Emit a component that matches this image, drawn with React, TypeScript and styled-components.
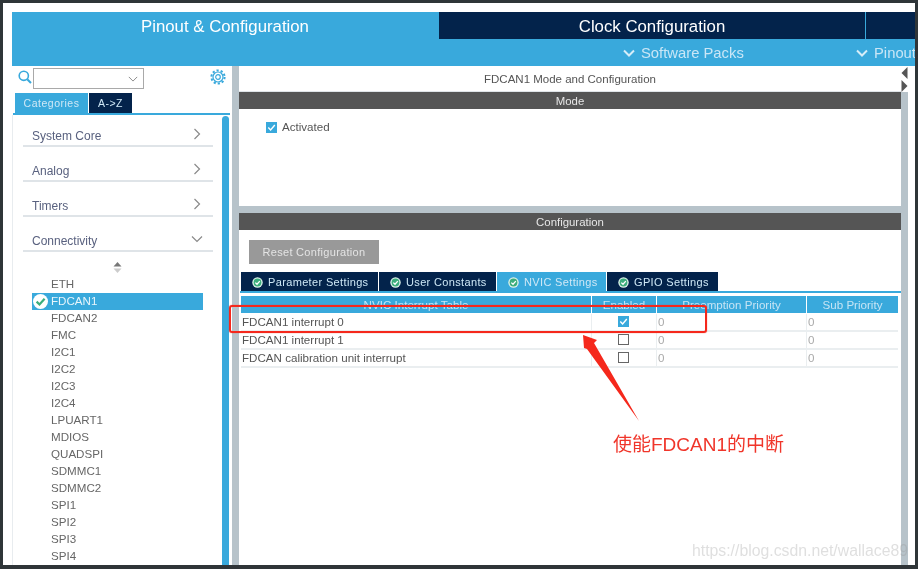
import React from "react";
import styled, { createGlobalStyle } from "styled-components";

const Global = createGlobalStyle`
  html, body { margin: 0; padding: 0; background: #2f3538; }
  body { font-family: "Liberation Sans", Arial, sans-serif; }
`;
const BLUE = "#39a9dc";
const NAVY = "#03234b";

const Frame = styled.div`
  width: 918px; height: 569px; box-sizing: border-box;
  padding: 3px 3px 4px 3px; background: #2f3538; overflow: hidden; position: relative;
  filter: blur(0.35px);
`;
const Sheet = styled.div`
  height: 100%; box-sizing: border-box; background: #fff; padding: 9px 0 0 9px;
  display: flex; flex-direction: column;
`;
const Header = styled.header`
  height: 54px; background: ${BLUE}; display: flex; flex-direction: column; flex: none;
`;
const TopTabs = styled.div`
  height: 27px; display: flex; flex: none;
`;
const MainTab = styled.div<{ $active?: boolean; $w: number }>`
  width: ${(p) => p.$w}px; flex: none; box-sizing: border-box; height: 27px;
  background: ${(p) => (p.$active ? BLUE : NAVY)};
  color: #fff; font-size: 16.8px; line-height: 29px; text-align: center;
  margin-right: 1px;
  &:last-child { margin-right: 0; flex: 1; }
`;
const SubBar = styled.div`
  height: 27px; display: flex; align-items: center; position: relative; overflow: hidden;
  color: #c9e6f6; font-size: 14.8px;
`;
const SubItem = styled.div<{ $left: number }>`
  position: absolute; left: ${(p) => p.$left}px; top: 0; height: 27px;
  display: flex; align-items: center; gap: 6px; white-space: nowrap;
`;
const Body = styled.div`
  flex: 1; display: flex; min-height: 0;
`;
const Side = styled.aside`
  width: 220px; flex: none; display: flex; flex-direction: column; overflow: hidden;
`;
const SearchRow = styled.div`
  height: 27px; flex: none; display: flex; align-items: flex-start; box-sizing: border-box;
  padding: 2px 6px 0 6px;
`;
const SearchIcon = styled.svg`
  width: 14px; height: 14px; margin: 2px 1px 0 0; flex: none;
`;
const SearchBox = styled.div`
  width: 111px; height: 21px; box-sizing: border-box; border: 1px solid #a9a9a9; flex: none;
  display: flex; align-items: center; justify-content: flex-end; padding-right: 5px;
  margin-left: 0;
`;
const Gear = styled.svg`
  width: 16px; height: 16px; margin: 1px 0 0 auto; flex: none;
`;
const SideTabs = styled.div`
  height: 20px; flex: none; display: flex; padding-left: 3px; gap: 1px;
`;
const SideTab = styled.div<{ $active?: boolean; $w: number }>`
  width: ${(p) => p.$w}px; height: 20px; background: ${(p) => (p.$active ? BLUE : NAVY)};
  color: #cfe8f6; font-size: 10.5px; letter-spacing: 0.5px; line-height: 20px; text-align: center;
`;
const SideRule = styled.div`
  height: 2px; flex: none; margin: 0 2px 0 1px; background: ${BLUE};
`;
const SideBody = styled.div`
  flex: 1; display: flex; min-height: 0; border-left: 1px solid #e8ecef; padding-right: 3px;
`;
const SideList = styled.div`
  flex: 1; min-width: 0; overflow: hidden;
`;
const Thumb = styled.div`
  width: 7px; flex: none; margin-top: 1px; background: ${BLUE}; border-radius: 4px 4px 0 0;
`;
const Category = styled.div`
  height: 32px; margin: 0 9px 3px 10px; box-sizing: border-box; border-bottom: 2px solid #dfe4e8;
  display: flex; align-items: flex-end; justify-content: space-between;
  padding: 0 10px 1px 9px; color: #59617f; font-size: 12px; line-height: 16px;
  svg { margin-bottom: 4px; }
`;
const SortMark = styled.div`
  height: 21px; display: flex; align-items: center; justify-content: center;
  box-sizing: border-box; padding-top: 4px;
`;
const Peripheral = styled.div<{ $selected?: boolean }>`
  height: 17px; margin: 0 19px 0 19px; padding-left: 19px; position: relative;
  background: ${(p) => (p.$selected ? BLUE : "transparent")};
  color: ${(p) => (p.$selected ? "#e8f5fb" : "#666")};
  font-size: 11.6px; line-height: 15px;
`;
const SelectedCheck = styled.svg`
  position: absolute; left: 0; top: 0; width: 17px; height: 17px;
`;
const Splitter = styled.div`
  width: 7px; flex: none; background: #b7c3ca;
`;
const Main = styled.main`
  width: 662px; flex: none; display: flex; flex-direction: column; min-height: 0;
`;
const PanelTitle = styled.div`
  height: 26px; flex: none; box-sizing: border-box; padding-top: 6px; text-align: center;
  color: #555; font-size: 11.5px; line-height: 15px; border-bottom: 1px solid #dfe4e8;
`;
const DarkBar = styled.div`
  height: 17px; flex: none; background: #555; color: #e7e7e7; font-size: 11.4px; line-height: 19px;
  text-align: center;
`;
const ModeBody = styled.div`
  height: 97px; flex: none; box-sizing: border-box; padding: 13px 0 0 27px;
  display: flex; align-items: flex-start; gap: 5px; color: #555; font-size: 11.6px; line-height: 11px;
  svg { flex: none; }
  span { line-height: 10px; }
`;
const Band = styled.div`
  height: 7px; flex: none; background: #b7c3ca;
`;
const ConfigBody = styled.div`
  flex: 1; min-height: 0; display: flex; flex-direction: column; overflow: hidden;
`;
const ResetButton = styled.div`
  width: 130px; height: 24px; flex: none; margin: 10px 0 0 10px; background: #999;
  color: #e4e4e4; font-size: 11px; letter-spacing: 0.3px; line-height: 24px; text-align: center;
`;
const ConfigTabs = styled.div`
  display: flex; gap: 1px; margin: 8px 0 0 2px; height: 19px; flex: none;
`;
const ConfigTab = styled.div<{ $active?: boolean; $w: number }>`
  width: ${(p) => p.$w}px; height: 19px; box-sizing: border-box; padding: 1px 0 0 11px;
  background: ${(p) => (p.$active ? BLUE : NAVY)}; color: #cfe8f6;
  font-size: 11px; letter-spacing: 0.35px; line-height: 18px; white-space: nowrap;
  display: flex; align-items: center; gap: 5px;
`;
const TabRule = styled.div`
  height: 2px; flex: none; margin-left: 1px; background: ${BLUE};
`;
const Table = styled.div`
  margin: 3px 3px 0 2px; flex: none;
`;
const TableRow = styled.div<{ $head?: boolean }>`
  display: grid; grid-template-columns: 350px 64px 149px 91px; column-gap: 1px;
  height: 18px; box-sizing: border-box;
  border-bottom: ${(p) => (p.$head ? "1px solid #fff" : "2px solid #eaeef0")};
`;
const HeadCell = styled.div`
  background: ${BLUE}; color: #c6e4f4; font-size: 11.6px; line-height: 17px; text-align: center;
  white-space: nowrap;
`;
const NameCell = styled.div`
  color: #555; font-size: 11.6px; line-height: 15px; padding-left: 1px; white-space: nowrap;
`;
const CheckCell = styled.div`
  display: flex; align-items: center; justify-content: center; box-shadow: -1px 0 #eaeef0;
  padding: 0 1px 1px 0;
`;
const NumCell = styled.div`
  color: #aaa; font-size: 11.6px; line-height: 15px; padding-left: 1px; box-shadow: -1px 0 #eaeef0;
`;
const Rail = styled.div`
  width: 7px; flex: none; display: flex; flex-direction: column;
`;
const RailArrows = styled.div`
  height: 26px; flex: none; display: flex; flex-direction: column; align-items: center;
`;
const RailTrack = styled.div`
  flex: 1; background: #b7c3ca;
`;
const RedBox = styled.div`
  position: absolute; left: 229px; top: 305px; width: 478px; height: 28px; box-sizing: border-box;
  border: 2px solid #f5281c; border-radius: 3px; box-shadow: 0 0 1px #f5281c;
`;
const ArrowMark = styled.svg`
  position: absolute; left: 578px; top: 330px; width: 66px; height: 96px;
`;
const Note = styled.div`
  position: absolute; left: 613px; top: 434px; color: #f0352a; font-size: 19px; line-height: 22px;
  font-family: "Liberation Sans", "Noto Sans CJK SC", sans-serif; white-space: nowrap;
`;
const Watermark = styled.div`
  position: absolute; right: 10px; top: 541px; color: rgba(150,150,150,.3); font-size: 15.8px;
  line-height: 19px; white-space: nowrap;
`;

const Chevron = ({ down, color = "#8a8a8a", size = 12, w = 1.2 }: { down?: boolean; color?: string; size?: number; w?: number }) => (
  <svg width={size} height={size} viewBox="0 0 12 12" fill="none" stroke={color} strokeWidth={w}>
    <path d={down ? "M1 3.5 6 8.5 11 3.5" : "M3.5 1 8.5 6 3.5 11"} />
  </svg>
);

const TabCheck = () => (
  <svg width="11" height="11" viewBox="0 0 11 11" style={{ flex: "none" }}>
    <circle cx="5.5" cy="5.5" r="5.2" fill="#dff3ea" />
    <circle cx="5.5" cy="5.5" r="3.9" fill="#3cae7c" />
    <path d="M3.3 5.6 5 7.2 7.8 4.1" fill="none" stroke="#fff" strokeWidth="1.3" />
  </svg>
);

const CheckBox = ({ checked }: { checked?: boolean }) =>
  checked ? (
    <svg width="11" height="11" viewBox="0 0 11 11">
      <rect width="11" height="11" fill={BLUE} />
      <path d="M2.3 5.6 4.6 8 8.8 3" fill="none" stroke="#fff" strokeWidth="1.4" />
    </svg>
  ) : (
    <svg width="11" height="11" viewBox="0 0 11 11">
      <rect x=".5" y=".5" width="10" height="10" fill="#fff" stroke="#666" />
    </svg>
  );

const peripherals = ["ETH", "FDCAN1", "FDCAN2", "FMC", "I2C1", "I2C2", "I2C3", "I2C4", "LPUART1", "MDIOS", "QUADSPI", "SDMMC1", "SDMMC2", "SPI1", "SPI2", "SPI3", "SPI4"];
const rows = [
  { name: "FDCAN1 interrupt 0", on: true },
  { name: "FDCAN1 interrupt 1", on: false },
  { name: "FDCAN calibration unit interrupt", on: false },
];
const tabs = [
  { label: "Parameter Settings", w: 137 },
  { label: "User Constants", w: 117 },
  { label: "NVIC Settings", w: 109, active: true },
  { label: "GPIO Settings", w: 111 },
];

export default function App() {
  return (
    <>
      <Global />
      <Frame>
        <Sheet>
          <Header>
            <TopTabs>
              <MainTab $active $w={426}>Pinout &amp; Configuration</MainTab>
              <MainTab $w={426}>Clock Configuration</MainTab>
              <MainTab $w={49} />
            </TopTabs>
            <SubBar>
              <SubItem $left={611}><Chevron down color="#d6edf8" size={12} w={2} />Software Packs</SubItem>
              <SubItem $left={844}><Chevron down color="#d6edf8" size={12} w={2} />Pinout</SubItem>
            </SubBar>
          </Header>
          <Body>
            <Side>
              <SearchRow>
                <SearchIcon viewBox="0 0 14 14" fill="none" stroke={BLUE} strokeWidth="1.6">
                  <circle cx="5.8" cy="5.8" r="4.6" />
                  <path d="M9.2 9.2 13 13" strokeWidth="2" />
                </SearchIcon>
                <SearchBox><Chevron down color="#777" size={10} w={1} /></SearchBox>
                <Gear viewBox="0 0 16 16" fill="none" stroke={BLUE}>
                  <circle cx="8" cy="8" r="2.3" strokeWidth="1.2" />
                  <circle cx="8" cy="8" r="5" strokeWidth="1.2" />
                  <circle cx="8" cy="8" r="6.6" strokeWidth="2" strokeDasharray="2.2 2" />
                </Gear>
              </SearchRow>
              <SideTabs>
                <SideTab $active $w={73}>Categories</SideTab>
                <SideTab $w={43}>A-&gt;Z</SideTab>
              </SideTabs>
              <SideRule />
              <SideBody>
                <SideList>
                  <Category>System Core<Chevron /></Category>
                  <Category>Analog<Chevron /></Category>
                  <Category>Timers<Chevron /></Category>
                  <Category>Connectivity<Chevron down /></Category>
                  <SortMark>
                    <svg width="9" height="11" viewBox="0 0 9 11">
                      <path d="M4.5 0 8.5 4.5H.5Z" fill="#777" />
                      <path d="M4.5 11 8.5 6.5H.5Z" fill="#ccc" />
                    </svg>
                  </SortMark>
                  {peripherals.map((name) => (
                    <Peripheral key={name} $selected={name === "FDCAN1"}>
                      {name === "FDCAN1" && (
                        <SelectedCheck viewBox="0 0 17 17">
                          <circle cx="8.5" cy="8.5" r="7.5" fill="#fff" />
                          <path d="M4.6 8.6 7.5 11.5 12.6 5.8" fill="none" stroke="#3cae7c" strokeWidth="2.2" />
                        </SelectedCheck>
                      )}
                      {name}
                    </Peripheral>
                  ))}
                </SideList>
                <Thumb />
              </SideBody>
            </Side>
            <Splitter />
            <Main>
              <PanelTitle>FDCAN1 Mode and Configuration</PanelTitle>
              <DarkBar>Mode</DarkBar>
              <ModeBody><CheckBox checked /><span>Activated</span></ModeBody>
              <Band />
              <DarkBar>Configuration</DarkBar>
              <ConfigBody>
                <ResetButton>Reset Configuration</ResetButton>
                <ConfigTabs>
                  {tabs.map((t) => (
                    <ConfigTab key={t.label} $w={t.w} $active={t.active}><TabCheck />{t.label}</ConfigTab>
                  ))}
                </ConfigTabs>
                <TabRule />
                <Table>
                  <TableRow $head>
                    <HeadCell>NVIC Interrupt Table</HeadCell>
                    <HeadCell>Enabled</HeadCell>
                    <HeadCell>Preemption Priority</HeadCell>
                    <HeadCell>Sub Priority</HeadCell>
                  </TableRow>
                  {rows.map((r) => (
                    <TableRow key={r.name}>
                      <NameCell>{r.name}</NameCell>
                      <CheckCell><CheckBox checked={r.on} /></CheckCell>
                      <NumCell>0</NumCell>
                      <NumCell>0</NumCell>
                    </TableRow>
                  ))}
                </Table>
              </ConfigBody>
            </Main>
            <Rail>
              <RailArrows>
                <svg width="7" height="26" viewBox="0 0 7 26">
                  <path d="M6.5 1V13L.5 7Z" fill="#555" />
                  <path d="M.5 14V26L6.5 20Z" fill="#555" />
                </svg>
              </RailArrows>
              <RailTrack />
            </Rail>
          </Body>
        </Sheet>
        <RedBox />
        <ArrowMark viewBox="0 0 66 96">
          <path d="M5 5 19 10 16 13 61 91 9 19 6 18Z" fill="#f5281c" />
        </ArrowMark>
        <Note>使能FDCAN1的中断</Note>
        <Watermark>https://blog.csdn.net/wallace89</Watermark>
      </Frame>
    </>
  );
}
